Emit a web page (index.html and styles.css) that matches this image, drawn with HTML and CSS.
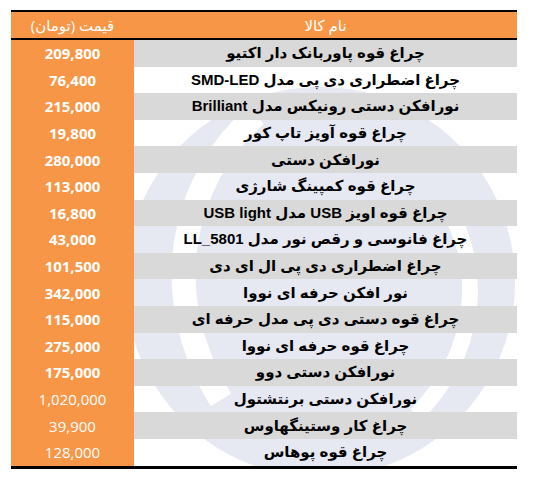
FILE: index.html
```html
<!DOCTYPE html>
<html lang="fa">
<head>
<meta charset="utf-8">
<title>قیمت چراغ قوه</title>
<link rel="stylesheet" href="styles.css">
</head>
<body>
<div class="sheet">
  <svg class="watermark" width="506" height="460" viewBox="0 0 506 460" aria-hidden="true">
    <circle cx="309" cy="272" r="195" fill="#e6e8f2"/>
    <path d="M245 105 C 170 170, 145 285, 210 390" fill="none" stroke="#ffffff" stroke-width="24"/>
    <path d="M435 195 C 475 260, 465 345, 405 405" fill="none" stroke="#ffffff" stroke-width="16"/>
  </svg>
  <table class="prices" dir="rtl">
    <thead>
      <tr><th class="name">نام کالا</th><th class="price">قیمت (تومان)</th></tr>
    </thead>
    <tbody>
      <tr class="g"><td class="name">چراغ قوه پاوربانک دار اکتیو</td><td class="price">209,800</td></tr>
      <tr><td class="name">چراغ اضطراری دی پی مدل SMD-LED</td><td class="price">76,400</td></tr>
      <tr class="g"><td class="name">نورافکن دستی رونیکس مدل Brilliant</td><td class="price">215,000</td></tr>
      <tr><td class="name">چراغ قوه آویز تاپ کور</td><td class="price">19,800</td></tr>
      <tr class="g"><td class="name">نورافکن دستی</td><td class="price">280,000</td></tr>
      <tr><td class="name">چراغ قوه کمپینگ شارژی</td><td class="price">113,000</td></tr>
      <tr class="g"><td class="name">چراغ قوه اویز USB مدل USB light</td><td class="price">16,800</td></tr>
      <tr><td class="name">چراغ فانوسی و رقص نور مدل LL_5801</td><td class="price">43,000</td></tr>
      <tr class="g"><td class="name">چراغ اضطراری دی پی ال ای دی</td><td class="price">101,500</td></tr>
      <tr><td class="name">نور افکن حرفه ای نووا</td><td class="price">342,000</td></tr>
      <tr class="g"><td class="name">چراغ قوه دستی دی پی مدل حرفه ای</td><td class="price">115,000</td></tr>
      <tr><td class="name">چراغ قوه حرفه ای نووا</td><td class="price">275,000</td></tr>
      <tr class="g"><td class="name">نورافکن دستی دوو</td><td class="price">175,000</td></tr>
      <tr><td class="name">نورافکن دستی برنتشتول</td><td class="price light">1,020,000</td></tr>
      <tr class="g"><td class="name">چراغ کار وستینگهاوس</td><td class="price light">39,900</td></tr>
      <tr><td class="name">چراغ قوه پوهاس</td><td class="price light">128,000</td></tr>
    </tbody>
  </table>
</div>
</body>
</html>
```

FILE: styles.css
```css
html, body {
  margin: 0;
  padding: 0;
  background: #ffffff;
}

body {
  font-family: "Open Sans", "DejaVu Sans", sans-serif;
}

.sheet {
  position: relative;
  width: 506px;
  margin: 10px 0 0 11px;
}

.watermark {
  position: absolute;
  left: 0;
  top: 0;
  z-index: 0;
}

.prices {
  position: relative;
  z-index: 1;
  width: 506px;
  border-collapse: collapse;
  table-layout: fixed;
  border-top: 2px solid #000;
  border-bottom: 3px solid #000;
}

.prices th,
.prices td {
  padding: 0;
  text-align: center;
  white-space: nowrap;
  overflow: hidden;
}

.prices thead th {
  height: 26px;
  background: #f79646;
  color: #ffffff;
  font-weight: normal;
  font-size: 15px;
  border-bottom: 2px solid #000;
}

.prices td {
  height: 26.6px;
  font-size: 15px;
  font-weight: bold;
  color: #000;
}

.prices td.name {
  font-family: "Liberation Sans", "DejaVu Sans", sans-serif;
}

.prices .name {
  width: 383px;
}

.prices .price {
  width: 123px;
}

.prices tbody tr.g td.name {
  background: #d9d9d9;
}

.prices td.price {
  background: #f79646;
  color: #ffffff;
  font-size: 15px;
}

.prices td.price.light {
  font-weight: normal;
}
```
